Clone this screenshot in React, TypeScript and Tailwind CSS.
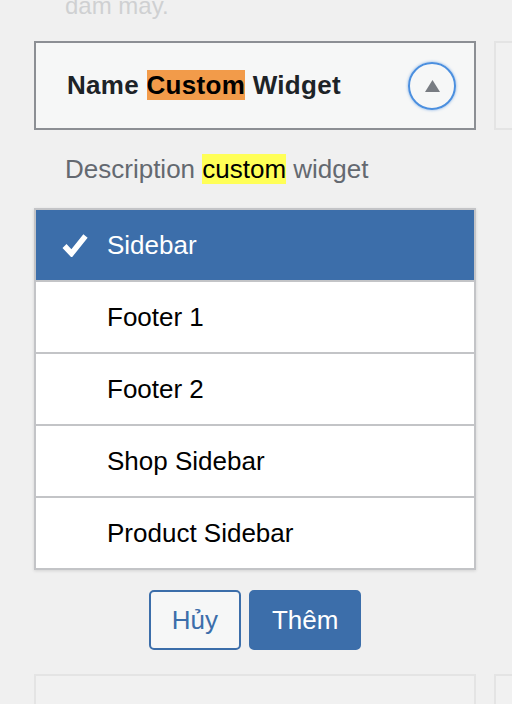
import React from 'react'

const areas = ['Sidebar', 'Footer 1', 'Footer 2', 'Shop Sidebar', 'Product Sidebar']

const Check = () => (
  <svg width="26" height="24" viewBox="0 0 26 24" fill="none">
    <polyline points="2.5,13 9.5,20.5 23.5,3" stroke="#ffffff" strokeWidth="5.5" strokeLinejoin="miter" />
  </svg>
)

const App = () => {
  const selected = 0

  return (
    <div className="h-[704px] overflow-hidden bg-[#f0f0f0] pl-[34px] flex flex-col font-['Liberation_Sans',Arial,sans-serif]">
      <p className="-mt-[8px] pl-[31px] text-[24px] leading-[28px] text-[#cfd0d2]">đám mây.</p>

      <div className="mt-[21px] grid grid-cols-[442px_442px] gap-x-[18px] gap-y-[24px] items-start">
        {/* Expanded widget */}
        <div className="flex flex-col">
          <div className="h-[89px] flex items-center justify-between border-2 border-[#8c8f94] bg-[#f6f7f7] pl-[31px] pr-[18px]">
            <h3 className="text-[26px] leading-[29px] font-bold tracking-[0.3px] text-[#1d2327]">
              Name <span className="bg-[#f29b4a] text-black">Custom</span> Widget
            </h3>
            <button className="w-[48px] h-[48px] rounded-full border-2 border-[#4b8fdf] shadow-[0_0_3px_rgba(75,143,223,0.7)] flex items-center justify-center">
              <svg width="15" height="12" viewBox="0 0 15 12">
                <polygon points="7.5,0 15,12 0,12" fill="#787c82" />
              </svg>
            </button>
          </div>

          <p className="pl-[31px] pt-[25px] pb-[24px] text-[26px] leading-[29px] text-[#646970]">
            Description <span className="bg-[#ffff57] text-black">custom</span> widget
          </p>

          <ul className="border-2 border-[#c3c4c7] bg-white divide-y-2 divide-[#c3c4c7] shadow-[0_1px_3px_rgba(0,0,0,0.12)]">
            {areas.map((area, index) => (
              <li
                key={area}
                className={
                  index === selected
                    ? 'box-content h-[70px] flex items-center gap-[19px] pl-[26px] bg-[#3c6eaa] text-white text-[26px]'
                    : 'box-content h-[70px] flex items-center gap-[19px] pl-[26px] text-black text-[26px]'
                }
              >
                <span className="w-[26px] h-[24px] flex">{index === selected && <Check />}</span>
                {area}
              </li>
            ))}
          </ul>

          <div className="mt-[20px] flex justify-center gap-2">
            <button className="h-[60px] px-[21px] rounded-[5px] border-2 border-[#3c6eaa] bg-[#f6f7f7] text-[#3c6eaa] text-[26px]">
              Hủy
            </button>
            <button className="h-[60px] px-[21px] rounded-[5px] border-2 border-[#3c6eaa] bg-[#3c6eaa] text-white text-[26px]">
              Thêm
            </button>
          </div>
        </div>

        {/* Collapsed widget in second column */}
        <div className="h-[89px] border-2 border-[#e4e4e4] bg-[#f1f1f1]" />

        {/* Next row */}
        <div className="h-[89px] border-2 border-[#e4e4e4] bg-[#f1f1f1]" />
        <div className="h-[89px] border-2 border-[#e4e4e4] bg-[#f1f1f1]" />
      </div>
    </div>
  )
}

export default App
